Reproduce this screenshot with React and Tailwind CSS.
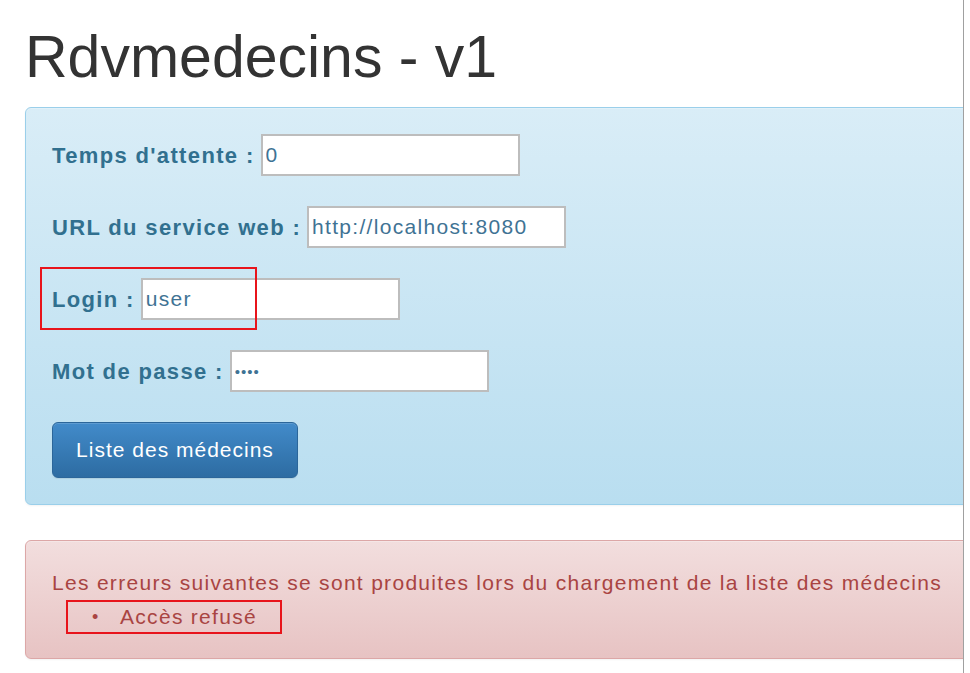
import React from "react";

const font = { fontFamily: '"Liberation Sans", Arial, sans-serif' };

function Field({ label, value, type = "text", mark }) {
  return (
    <div className="relative flex items-center h-[42px]">
      <label className="font-bold text-[22px] text-[#31708f] tracking-[1.35px] mr-[6px]">
        {label}
      </label>
      <input
        type={type}
        defaultValue={value}
        className={
          "w-[259px] h-[42px] border-2 border-[#bdbdbd] bg-white px-[3px] text-[#3f7394] outline-none " +
          (type === "password" ? "text-[15px] tracking-[1px]" : "text-[21px] tracking-[1.3px]")
        }
      />
      {mark && (
        <div className="absolute left-[-12px] top-[-11px] w-[217px] h-[63px] border-2 border-[#e8141b] pointer-events-none" />
      )}
    </div>
  );
}

export default function App() {
  return (
    <div style={font} className="w-[964px] min-h-[673px] bg-white border-r border-[#a0a0a0] overflow-hidden pl-[25px]">
      <h1 className="pt-[24px] text-[59px] leading-[66px] text-[#333] font-normal">
        Rdvmedecins - v1
      </h1>

      <div className="mt-[17px] mr-[-12px] rounded-[6px] border border-[#9acfea] bg-gradient-to-b from-[#d9edf7] to-[#b9def0] pl-[26px] pt-[26px] pb-[26px] flex flex-col gap-[30px] shadow-[inset_0_1px_0_rgba(255,255,255,0.25),0_1px_2px_rgba(0,0,0,0.05)]">
        <Field label="Temps d'attente :" value="0" />
        <Field label="URL du service web :" value="http://localhost:8080" />
        <Field label="Login :" value="user" mark />
        <Field label="Mot de passe :" value="user" type="password" />
        <div>
          <button className="w-[246px] h-[56px] rounded-[6px] border border-[#2b669a] bg-gradient-to-b from-[#428bca] to-[#2d6ca2] text-white text-[21px] tracking-[1px] shadow-[inset_0_1px_0_rgba(255,255,255,0.15),0_1px_1px_rgba(0,0,0,0.075)]">
            Liste des médecins
          </button>
        </div>
      </div>

      <div className="mt-[35px] mr-[-12px] rounded-[6px] border border-[#dca7a7] bg-gradient-to-b from-[#f2dede] to-[#e7c3c3] pl-[26px] pt-[25px] pb-[24px] text-[#a94442] text-[21px] leading-[34px] tracking-[1.3px] shadow-[inset_0_1px_0_rgba(255,255,255,0.25),0_1px_2px_rgba(0,0,0,0.05)]">
        <div>
          Les erreurs suivantes se sont produites lors du chargement de la liste des médecins
        </div>
        <ul className="list-none">
          <li className="relative flex items-center h-[34px]">
            <span className="ml-[40px] text-[18px] w-[28px]">•</span>
            <span>Accès refusé</span>
            <div className="absolute left-[14px] top-0 w-[216px] h-[34px] border-2 border-[#e8141b] pointer-events-none" />
          </li>
        </ul>
      </div>
    </div>
  );
}
